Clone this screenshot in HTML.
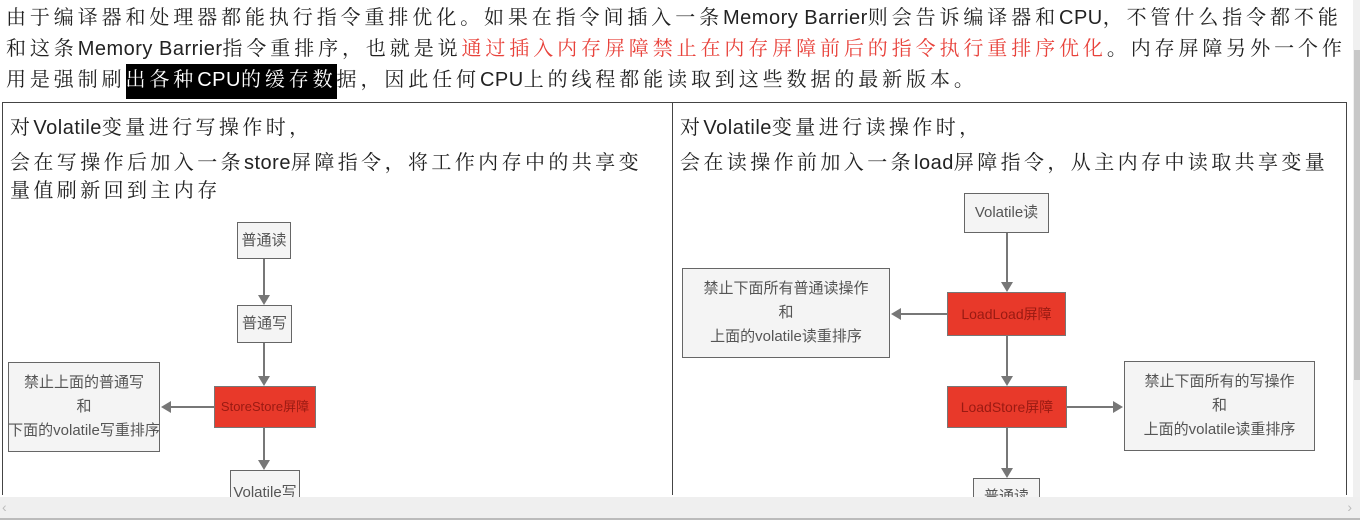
<!DOCTYPE html>
<html><head><meta charset="utf-8"><style>
body{margin:0;width:1360px;height:520px;overflow:hidden;background:#fff;position:relative;font-family:"Liberation Sans","Noto Sans CJK SC",sans-serif;color:#222}
.l{position:absolute;left:6px;font-size:20px;white-space:nowrap;line-height:30px;letter-spacing:3.9px;font-family:"Liberation Sans","Noto Serif CJK SC",serif}
.e{letter-spacing:0.5px}
.red{color:#e8423b}
.hl{background:#000;color:#fff;padding:5px 0 8px}
.cell{position:absolute;top:102px;height:393px;border:1px solid #444;border-bottom:none;box-sizing:border-box}
.t{position:absolute;font-size:20px;white-space:nowrap;line-height:28px;color:#222;letter-spacing:3.4px;font-family:"Liberation Sans","Noto Serif CJK SC",serif}
.b{position:absolute;border:1px solid #666;background:#f4f4f4;color:#555;font-size:15px;display:flex;align-items:center;justify-content:center;text-align:center;line-height:24px;box-sizing:border-box;white-space:nowrap}
.r{background:#e8392a;color:#9a1a12;border-color:#777}
.v{position:absolute;width:2px;background:#777}
.h{position:absolute;height:2px;background:#777}
.ad{position:absolute;width:0;height:0;border-left:6px solid transparent;border-right:6px solid transparent;border-top:10px solid #777}
.al{position:absolute;width:0;height:0;border-top:6px solid transparent;border-bottom:6px solid transparent;border-right:10px solid #777}
.ar{position:absolute;width:0;height:0;border-top:6px solid transparent;border-bottom:6px solid transparent;border-left:10px solid #777}
</style></head><body>
<div class="l" style="top:3px">由于编译器和处理器都能执行指令重排优化。如果在指令间插入一条<span class="e">Memory Barrier</span>则会告诉编译器和<span class="e">CPU</span>，不管什么指令都不能</div>
<div class="l" style="top:34px">和这条<span class="e">Memory Barrier</span>指令重排序，也就是说<span class="red">通过插入内存屏障禁止在内存屏障前后的指令执行重排序优化</span>。内存屏障另外一个作</div>
<div class="l" style="top:65px">用是强制刷<span class="hl">出各种<span class="e">CPU</span>的缓存数</span>据，因此任何<span class="e">CPU</span>上的线程都能读取到这些数据的最新版本。</div>
<div class="cell" style="left:2px;width:671px"></div>
<div class="cell" style="left:672px;width:675px"></div>
<div class="t" style="left:10px;top:114px">对<span class="e">Volatile</span>变量进行写操作时，</div>
<div class="t" style="left:10px;top:149px">会在写操作后加入一条<span class="e">store</span>屏障指令，将工作内存中的共享变</div>
<div class="t" style="left:10px;top:177px">量值刷新回到主内存</div>
<div class="t" style="left:680px;top:114px">对<span class="e">Volatile</span>变量进行读操作时，</div>
<div class="t" style="left:680px;top:149px">会在读操作前加入一条<span class="e">load</span>屏障指令，从主内存中读取共享变量</div>
<!-- left diagram -->
<div class="b" style="left:237px;top:222px;width:54px;height:37px">普通读</div>
<div class="v" style="left:263px;top:259px;height:40px"></div><div class="ad" style="left:258px;top:295px"></div>
<div class="b" style="left:237px;top:305px;width:55px;height:38px">普通写</div>
<div class="v" style="left:263px;top:343px;height:37px"></div><div class="ad" style="left:258px;top:376px"></div>
<div class="b r" style="left:214px;top:386px;width:102px;height:42px;font-size:13px">StoreStore屏障</div>
<div class="h" style="left:168px;top:406px;width:46px"></div><div class="al" style="left:161px;top:401px"></div>
<div class="b" style="left:8px;top:362px;width:152px;height:90px">禁止上面的普通写<br>和<br>下面的volatile写重排序</div>
<div class="v" style="left:263px;top:428px;height:36px"></div><div class="ad" style="left:258px;top:460px"></div>
<div class="b" style="left:230px;top:470px;width:70px;height:40px;align-items:flex-start;padding-top:10px">Volatile写</div>
<!-- right diagram -->
<div class="b" style="left:964px;top:193px;width:85px;height:40px">Volatile读</div>
<div class="v" style="left:1006px;top:233px;height:53px"></div><div class="ad" style="left:1001px;top:282px"></div>
<div class="b r" style="left:947px;top:292px;width:119px;height:44px;font-size:14px">LoadLoad屏障</div>
<div class="h" style="left:900px;top:313px;width:47px"></div><div class="al" style="left:891px;top:308px"></div>
<div class="b" style="left:682px;top:268px;width:208px;height:90px">禁止下面所有普通读操作<br>和<br>上面的volatile读重排序</div>
<div class="v" style="left:1006px;top:336px;height:44px"></div><div class="ad" style="left:1001px;top:376px"></div>
<div class="b r" style="left:947px;top:386px;width:120px;height:42px;font-size:14px">LoadStore屏障</div>
<div class="h" style="left:1067px;top:406px;width:47px"></div><div class="ar" style="left:1113px;top:401px"></div>
<div class="b" style="left:1124px;top:361px;width:191px;height:90px">禁止下面所有的写操作<br>和<br>上面的volatile读重排序</div>
<div class="v" style="left:1006px;top:428px;height:44px"></div><div class="ad" style="left:1001px;top:468px"></div>
<div class="b" style="left:973px;top:478px;width:67px;height:40px;align-items:flex-start;padding-top:6px">普通读</div>
<!-- scrollbars -->
<div style="position:absolute;left:1353px;top:0;width:7px;height:497px;background:#f0f0f0"></div>
<div style="position:absolute;left:1354px;top:50px;width:6px;height:330px;background:#c8c8c8"></div>
<div style="position:absolute;left:0;top:497px;width:1360px;height:23px;background:#efefef;border-bottom:2px solid #bbb;box-sizing:border-box;color:#bbb;font-size:14px;line-height:20px"><span style="position:absolute;left:2px">‹</span><span style="position:absolute;right:8px">›</span></div>
</body></html>
